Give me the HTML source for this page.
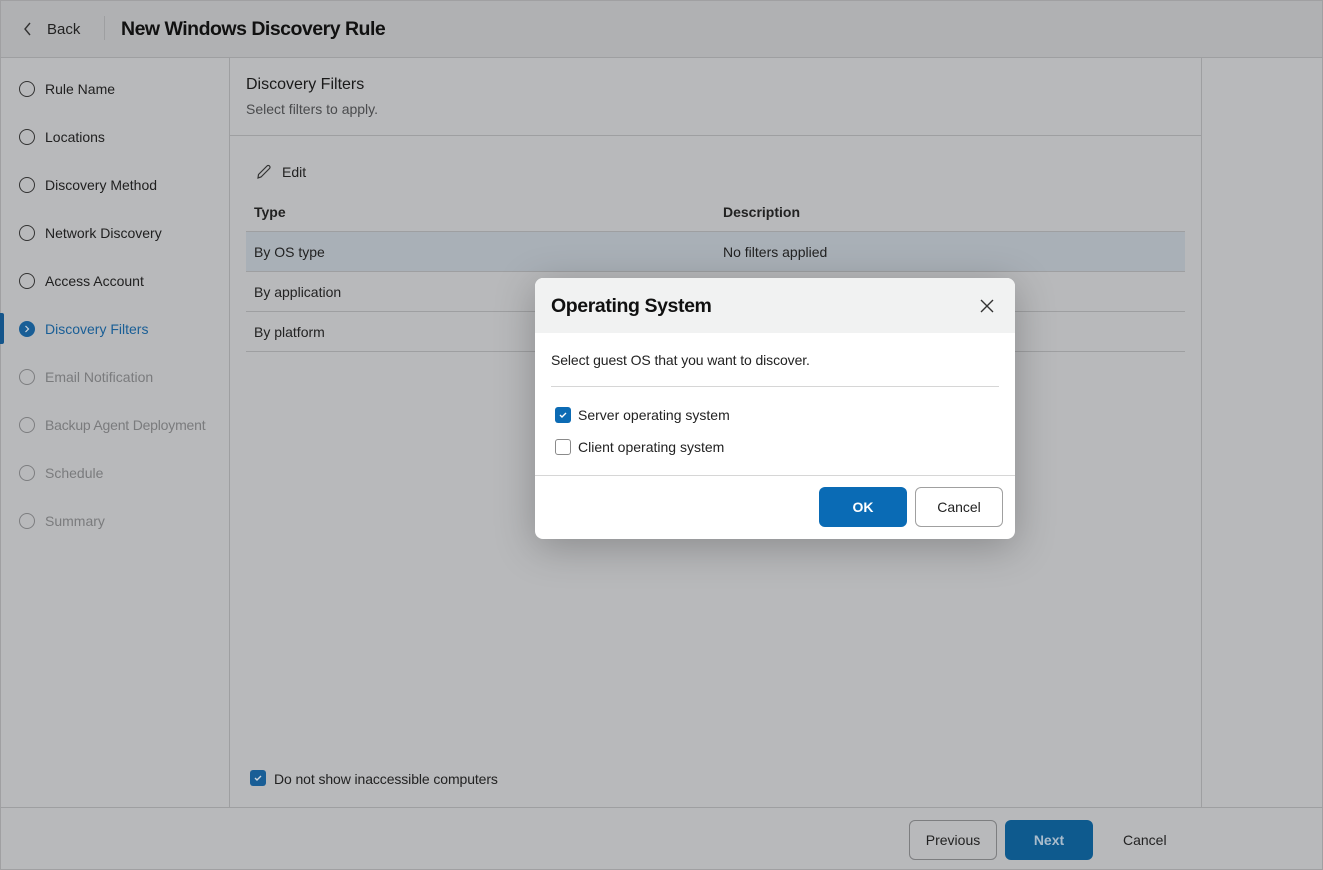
<!DOCTYPE html><html><head><style>
*{box-sizing:border-box;margin:0;padding:0}
body{width:1323px;height:870px;overflow:hidden;background:#b8b9bb;font-family:"Liberation Sans",sans-serif;color:#222;position:relative;font-size:14px}
.abs{position:absolute}
.hdr{left:0;top:0;width:1323px;height:57px;background:#b0b1b3;border:1px solid #a0a0a2;border-bottom:none}
.step{position:absolute;left:19px;display:flex;align-items:center;font-size:14px;color:#1f1f1f}
.step i{width:16px;height:16px;border:1.3px solid #333;border-radius:50%;margin-right:10px;display:inline-block}
.dim{color:#7a7b7d}.dim i{border-color:#7d7e80}
.line{background:#9e9fa1}
.cb{width:16px;height:16px;border-radius:3px;display:flex;align-items:center;justify-content:center}
</style></head><body>
<div class="abs hdr"></div>
<div class="abs" style="left:0;top:0;width:1323px;height:870px;border:1px solid #a0a0a2"></div>
<svg class="abs" style="left:22px;top:21px" width="12" height="16"><path d="M8 2 L3 8 L8 14" stroke="#333" stroke-width="1.4" fill="none"/></svg>
<div class="abs" style="left:47px;top:21px;font-size:15px">Back</div>
<div class="abs line" style="left:104px;top:16px;width:1px;height:24px"></div>
<div class="abs" style="left:121px;top:18px;font-size:19.5px;font-weight:bold;color:#111;letter-spacing:-0.5px">New Windows Discovery Rule</div>
<div class="abs line" style="left:0;top:57px;width:1323px;height:1px"></div>
<div class="abs line" style="left:229px;top:57px;width:1px;height:750px"></div>
<div class="abs line" style="left:1201px;top:57px;width:1px;height:750px"></div>
<div class="abs line" style="left:0;top:807px;width:1323px;height:1px"></div>
<div class="step" style="top:81px"><i></i>Rule Name</div>
<div class="step" style="top:129px"><i></i>Locations</div>
<div class="step" style="top:177px"><i></i>Discovery Method</div>
<div class="step" style="top:225px"><i></i>Network Discovery</div>
<div class="step" style="top:273px"><i></i>Access Account</div>
<div class="abs" style="left:0;top:313px;width:4px;height:31px;background:#14558b;border-radius:0 2px 2px 0"></div>
<div class="step" style="top:321px;color:#195e96"><span style="width:16px;height:16px;border-radius:50%;background:#195e96;margin-right:10px;display:inline-flex;align-items:center;justify-content:center"><svg width="8" height="8"><path d="M2.5 1 L5.5 4 L2.5 7" stroke="#cfd6de" stroke-width="1.2" fill="none"/></svg></span>Discovery Filters</div>
<div class="step dim" style="top:369px"><i></i>Email Notification</div>
<div class="step dim" style="top:417px;letter-spacing:-0.2px"><i></i>Backup Agent Deployment</div>
<div class="step dim" style="top:465px"><i></i>Schedule</div>
<div class="step dim" style="top:513px"><i></i>Summary</div>
<div class="abs" style="left:246px;top:76px;font-size:16px;color:#1a1a1a">Discovery Filters</div>
<div class="abs" style="left:246px;top:101px;font-size:14px;color:#4a4b4d">Select filters to apply.</div>
<div class="abs line" style="left:230px;top:135px;width:971px;height:1px"></div>
<svg class="abs" style="left:255px;top:163px" width="18" height="18"><path d="M3 15 L3.5 11.5 L12 3 A1.4 1.4 0 0 1 14.5 5.5 L6 14 Z" stroke="#333" stroke-width="1.2" fill="none"/></svg>
<div class="abs" style="left:282px;top:164px">Edit</div>
<div class="abs" style="left:254px;top:204px;font-weight:bold;color:#222">Type</div>
<div class="abs" style="left:723px;top:204px;font-weight:bold;color:#222">Description</div>
<div class="abs line" style="left:246px;top:231px;width:939px;height:1px"></div>
<div class="abs" style="left:246px;top:232px;width:939px;height:39px;background:#a9b0b7"></div>
<div class="abs" style="left:254px;top:244px">By OS type</div>
<div class="abs" style="left:723px;top:244px">No filters applied</div>
<div class="abs line" style="left:246px;top:271px;width:939px;height:1px"></div>
<div class="abs" style="left:254px;top:284px">By application</div>
<div class="abs line" style="left:246px;top:311px;width:939px;height:1px"></div>
<div class="abs" style="left:254px;top:324px">By platform</div>
<div class="abs line" style="left:246px;top:351px;width:939px;height:1px"></div>
<div class="abs cb" style="left:250px;top:770px;background:#195e96"><svg width="10" height="10"><path d="M2 5 L4 7 L8 3" stroke="#cfd6de" stroke-width="1.4" fill="none"/></svg></div>
<div class="abs" style="left:274px;top:771px;letter-spacing:-0.1px">Do not show inaccessible computers</div>
<div class="abs" style="left:909px;top:820px;width:88px;height:40px;border:1px solid #7d7e80;border-radius:6px;text-align:center;line-height:38px">Previous</div>
<div class="abs" style="left:1005px;top:820px;width:88px;height:40px;background:#0e5a8e;border-radius:6px;text-align:center;line-height:40px;color:#a9bccc;font-weight:bold">Next</div>
<div class="abs" style="left:1123px;top:832px">Cancel</div>
<div class="abs" style="left:535px;top:278px;width:480px;height:261px;background:#fff;border-radius:8px;box-shadow:0 8px 40px rgba(0,0,0,0.25);overflow:hidden">
<div style="height:55px;background:#f1f2f2;padding:17px 0 0 16px;font-size:19.5px;font-weight:bold;color:#111;letter-spacing:-0.4px">Operating System</div>
<svg class="abs" style="left:445px;top:21px" width="14" height="14"><path d="M1 1 L13 13 M13 1 L1 13" stroke="#333" stroke-width="1.4"/></svg>
<div class="abs" style="left:16px;top:74px;color:#222;letter-spacing:-0.1px">Select guest OS that you want to discover.</div>
<div class="abs" style="left:16px;top:108px;width:448px;height:1px;background:#d6d6d6"></div>
<div class="abs cb" style="left:20px;top:129px;background:#0c6bb4"><svg width="10" height="10"><path d="M2 5 L4 7 L8 3" stroke="#fff" stroke-width="1.4" fill="none"/></svg></div>
<div class="abs" style="left:43px;top:129px">Server operating system</div>
<div class="abs cb" style="left:20px;top:161px;border:1px solid #8a8a8a"></div>
<div class="abs" style="left:43px;top:161px">Client operating system</div>
<div class="abs" style="left:0;top:197px;width:480px;height:1px;background:#d6d6d6"></div>
<div class="abs" style="left:284px;top:209px;width:88px;height:40px;background:#0a6bb5;border-radius:6px;color:#fff;font-weight:bold;text-align:center;line-height:40px">OK</div>
<div class="abs" style="left:380px;top:209px;width:88px;height:40px;border:1px solid #a0a0a0;border-radius:6px;text-align:center;line-height:38px">Cancel</div>
</div>
</body></html>
